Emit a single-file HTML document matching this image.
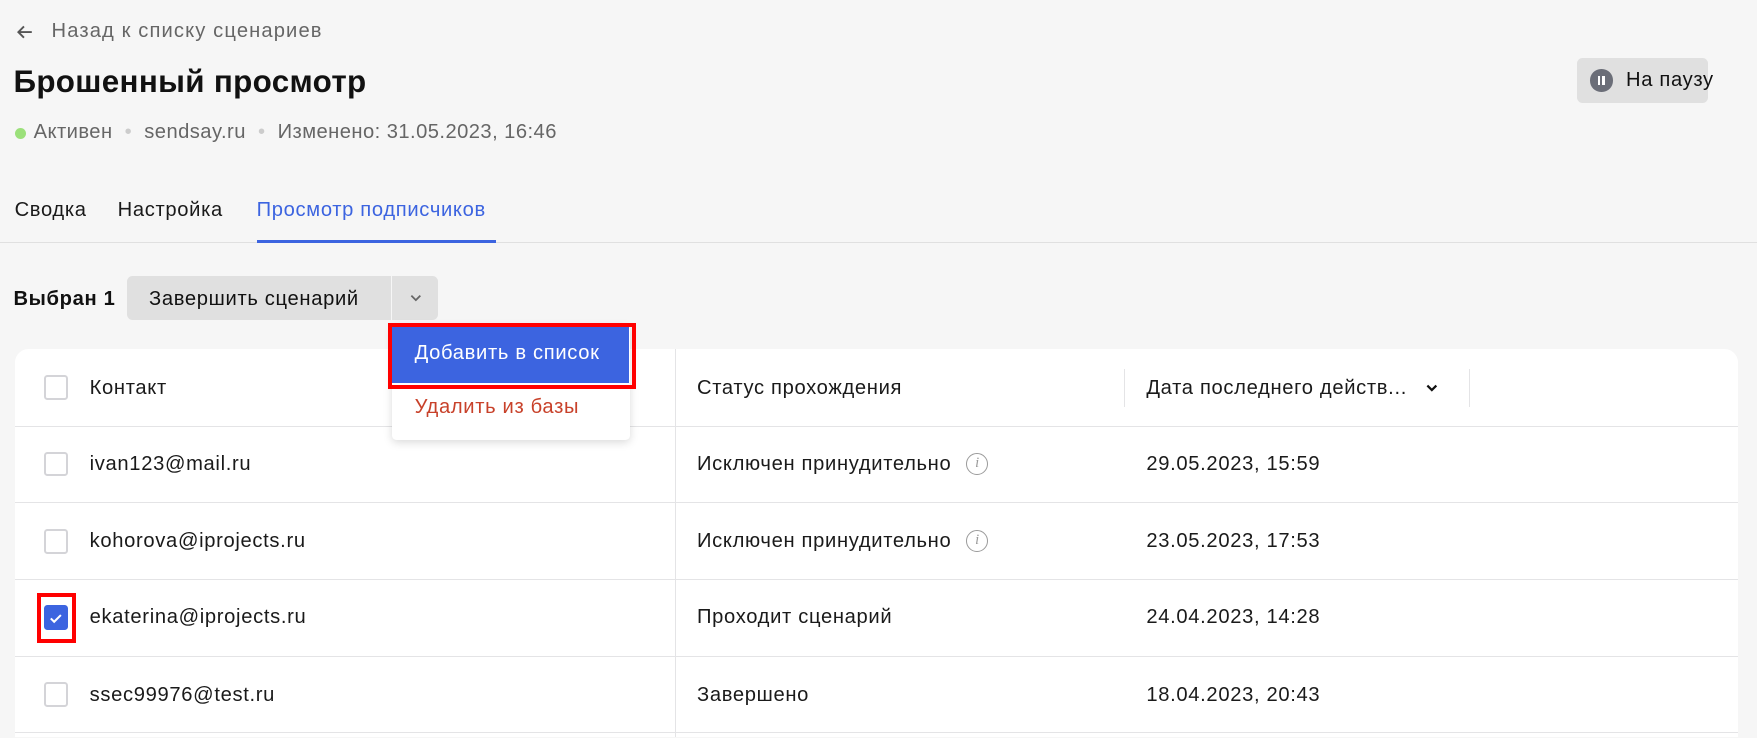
<!DOCTYPE html>
<html><head><meta charset="utf-8"><style>
*{box-sizing:border-box;margin:0;padding:0}
html,body{width:1757px;height:738px;overflow:hidden;background:#f6f6f6}
body{font-family:"Liberation Sans",Arial,sans-serif;color:#1a1a1a}
#w{position:relative;width:1568px;height:658px;zoom:1.1206;overflow:hidden;letter-spacing:0.6px}
.a{position:absolute;white-space:nowrap}
.cb{position:absolute;width:22px;height:22px;border:2px solid #d4d4d8;border-radius:3px;background:#fff}
.row{position:absolute;left:13px;width:1538px;height:1px;background:#e4e4e6}
.t{font-size:18px;color:#1a1a1a}
.info{position:absolute;width:20px;height:20px;border:1.5px solid #9a9a9a;border-radius:50%;color:#9a9a9a;font-size:13px;font-style:italic;text-align:center;line-height:17px;font-family:"Liberation Serif",serif;letter-spacing:0}
</style></head><body><div id="w">
<svg class="a" style="left:13px;top:20px" width="18" height="18" viewBox="0 0 18 18"><path d="M15 9H3M8 4L3 9l5 5" stroke="#555" stroke-width="1.7" fill="none"/></svg>
<div class="a" style="left:46px;top:18px;font-size:18px;color:#666;letter-spacing:1px">Назад к списку сценариев</div>
<div class="a" style="left:12px;top:57px;font-size:28px;font-weight:bold;color:#111;letter-spacing:0.3px">Брошенный просмотр</div>
<div class="a" style="left:13px;top:114px;width:10px;height:10px;border-radius:50%;background:#9be07a"></div>
<div class="a" style="left:30px;top:108px;font-size:18px;color:#666;letter-spacing:0.4px">Активен <span style="color:#ccc">&nbsp;•&nbsp;</span> sendsay.ru <span style="color:#ccc">&nbsp;•&nbsp;</span> Изменено: 31.05.2023, 16:46</div>
<div class="a" style="left:1407px;top:52px;width:117px;height:40px;background:#e0e0e0;border-radius:5px"></div>
<div class="a" style="left:1419px;top:62px;width:20px;height:20px;border-radius:50%;background:#6b6e78"></div>
<div class="a" style="left:1426px;top:68px;width:2px;height:8px;background:#fff"></div>
<div class="a" style="left:1430px;top:68px;width:2px;height:8px;background:#fff"></div>
<div class="a" style="left:1451px;top:62px;font-size:18px;color:#111">На паузу</div>
<div class="a t" style="left:13px;top:178px">Сводка</div>
<div class="a t" style="left:105px;top:178px">Настройка</div>
<div class="a t" style="left:229px;top:178px;color:#3c64e0">Просмотр подписчиков</div>
<div class="a" style="left:0;top:216px;width:1568px;height:1px;background:#e0e0e0"></div>
<div class="a" style="left:229px;top:214px;width:214px;height:3px;background:#3c64e0"></div>
<div class="a" style="left:12px;top:257px;font-size:18px;font-weight:bold;color:#111">Выбран 1</div>
<div class="a" style="left:113px;top:246px;width:278px;height:40px;background:#e0e0e0;border-radius:5px"></div>
<div class="a" style="left:349px;top:246px;width:1px;height:40px;background:#f6f6f6"></div>
<div class="a" style="left:133px;top:257px;font-size:18px;color:#111">Завершить сценарий</div>
<svg class="a" style="left:364px;top:259px" width="14" height="14" viewBox="0 0 14 14"><path d="M3 5l4 4 4-4" stroke="#666" stroke-width="1.6" fill="none"/></svg>
<div class="a" style="left:13px;top:311px;width:1538px;height:347px;background:#fff;border-radius:12px 12px 0 0"></div>
<div class="a" style="left:602px;top:311px;width:1px;height:347px;background:#e4e4e6"></div>
<div class="a" style="left:1003px;top:329px;width:1px;height:34px;background:#e4e4e6"></div>
<div class="a" style="left:1311px;top:329px;width:1px;height:34px;background:#e4e4e6"></div>
<div class="row" style="top:380px"></div><div class="row" style="top:448px"></div><div class="row" style="top:517px"></div><div class="row" style="top:585px"></div><div class="row" style="top:653px"></div>
<div class="cb" style="left:39px;top:335px"></div><div class="a t" style="left:80px;top:336px">Контакт</div>
<div class="a t" style="left:622px;top:336px">Статус прохождения</div>
<div class="a t" style="left:1023px;top:336px">Дата последнего действ...</div>
<svg class="a" style="left:1271px;top:339px" width="14" height="14" viewBox="0 0 14 14"><path d="M3 5l4 4 4-4" stroke="#111" stroke-width="2" fill="none"/></svg>
<div class="cb" style="left:39px;top:403px"></div><div class="a t" style="left:80px;top:404px">ivan123@mail.ru</div>
<div class="a t" style="left:622px;top:404px">Исключен принудительно</div><div class="info" style="left:862px;top:404px">i</div>
<div class="a t" style="left:1023px;top:404px">29.05.2023, 15:59</div>
<div class="cb" style="left:39px;top:472px"></div><div class="a t" style="left:80px;top:473px">kohorova@iprojects.ru</div>
<div class="a t" style="left:622px;top:473px">Исключен принудительно</div><div class="info" style="left:862px;top:473px">i</div>
<div class="a t" style="left:1023px;top:473px">23.05.2023, 17:53</div>
<div class="a" style="left:33px;top:529px;width:35px;height:45px;border:4px solid #f00"></div>
<div class="a" style="left:39px;top:540px;width:22px;height:22px;border-radius:3px;background:#3c64e0"></div>
<svg class="a" style="left:43px;top:544px" width="14" height="14" viewBox="0 0 14 14"><path d="M2.5 7.5l3 3 6-6" stroke="#fff" stroke-width="1.8" fill="none"/></svg>
<div class="a t" style="left:80px;top:541px">ekaterina@iprojects.ru</div>
<div class="a t" style="left:622px;top:541px">Проходит сценарий</div>
<div class="a t" style="left:1023px;top:541px">24.04.2023, 14:28</div>
<div class="cb" style="left:39px;top:609px"></div><div class="a t" style="left:80px;top:610px">ssec99976@test.ru</div>
<div class="a t" style="left:622px;top:610px">Завершено</div>
<div class="a t" style="left:1023px;top:610px">18.04.2023, 20:43</div>
<div class="a" style="left:350px;top:290px;width:212px;height:103px;background:#fff;border-radius:4px;box-shadow:0 2px 8px rgba(0,0,0,.15)"></div>
<div class="a" style="left:350px;top:292px;width:211px;height:50px;background:#3c64e0"></div>
<div class="a" style="left:346px;top:288px;width:222px;height:59px;border:4px solid #f00"></div>
<div class="a" style="left:370px;top:305px;font-size:18px;color:#fff">Добавить в список</div>
<div class="a" style="left:370px;top:353px;font-size:18px;color:#c8412a">Удалить из базы</div>
</div></body></html>
